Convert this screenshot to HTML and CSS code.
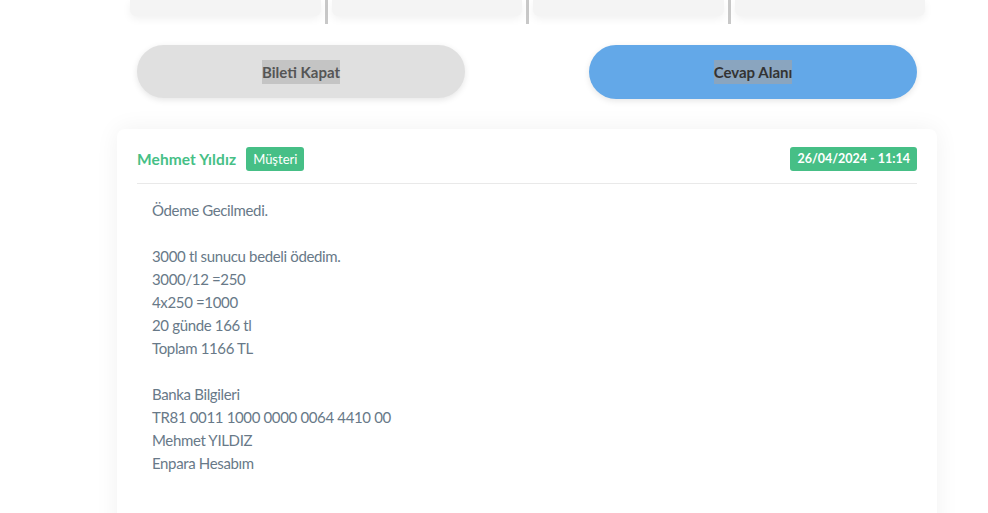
FILE: index.html
```html
<!DOCTYPE html>
<html lang="tr">
<head>
  <meta charset="UTF-8" />
  <meta name="viewport" content="width=device-width, initial-scale=1.0" />
  <title>Destek Talebi</title>
  <link rel="stylesheet" href="styles.css">
</head>
<body>
  <main class="ticket">
    <!-- Özet kutuları -->
    <div class="stats">
      <div class="stat"></div>
      <span class="sep"></span>
      <div class="stat"></div>
      <span class="sep"></span>
      <div class="stat"></div>
      <span class="sep"></span>
      <div class="stat"></div>
    </div>

    <!-- İşlem butonları -->
    <div class="actions">
      <button class="btn btn-close"><span>Bileti Kapat</span></button>
      <button class="btn btn-reply"><span>Cevap Alanı</span></button>
    </div>

    <!-- Mesaj -->
    <article class="message">
      <header class="msg-head">
        <div class="author">
          <strong>Mehmet Yıldız</strong>
          <span class="tag">Müşteri</span>
        </div>
        <span class="tag date">26/04/2024 - 11:14</span>
      </header>
      <div class="msg-body">
        <p>Ödeme Gecilmedi.</p>
        <p>3000 tl sunucu bedeli ödedim.<br>3000/12 =250<br>4x250 =1000<br>20 günde 166 tl<br>Toplam 1166 TL</p>
        <p>Banka Bilgileri<br>TR81 0011 1000 0000 0064 4410 00<br>Mehmet YILDIZ<br>Enpara Hesabım</p>
      </div>
    </article>
  </main>
</body>
</html>
```

FILE: styles.css
```css
/* Destek talebi detay sayfası */
:root {
  --green: #46bf86;
  --blue: #63a8e8;
  --text: #687988;
}
* { box-sizing: border-box; }
body {
  margin: 0;
  background: #fff;
  font-family: Lato, "Noto Sans", sans-serif;
  overflow: hidden;
}
.ticket {
  width: 820px;
  margin-left: 117px;
}
.stats {
  display: flex;
  gap: 4px;
  padding: 0 12px 0 13px;
  height: 24px;
}
.stat {
  flex: 1;
  height: 16px;
  background: #f4f4f4;
  border-radius: 0 0 6px 6px;
  box-shadow: 0 3px 8px rgba(0,0,0,.06);
}
.sep {
  width: 3px;
  background: #c8c8c8;
}
.actions {
  display: flex;
  justify-content: space-between;
  padding: 21px 20px 0;
}
.btn {
  width: 328px;
  height: 53px;
  border: none;
  border-radius: 27px;
  font-family: inherit;
  font-size: 15px;
  font-weight: 700;
  box-shadow: 0 2px 6px rgba(0,0,0,.1);
}
.btn span { padding: 3px 0; }
.btn-close { background: #e0e0e0; color: #555; }
.btn-close span { background: #c4c4c4; }
.btn-reply { background: var(--blue); color: #333; height: 54px; }
.btn-reply span { background: #8aa5bf; }
.message {
  margin-top: 30px;
  background: #fff;
  border-radius: 8px;
  box-shadow: 0 0 24px rgba(0,0,0,.06);
  padding: 18px 20px 40px;
  min-height: 400px;
}
.msg-head {
  display: flex;
  justify-content: space-between;
  align-items: center;
  padding-bottom: 12px;
  border-bottom: 1px solid #e9e9e9;
}
.author {
  display: flex;
  align-items: center;
  gap: 10px;
}
.author strong {
  color: var(--green);
  font-size: 15.5px;
  letter-spacing: .1px;
}
.tag {
  background: var(--green);
  color: #fff;
  font-size: 13px;
  line-height: 24px;
  padding: 0 7px;
  border-radius: 3px;
}
.date { font-weight: 700; font-size: 12.5px; padding: 0 7px; }
.msg-body {
  padding: 15px 15px 0;
  color: var(--text);
  font-size: 15px;
  line-height: 23px;
  letter-spacing: -.35px;
}
.msg-body p { margin: 0 0 23px; }
```
